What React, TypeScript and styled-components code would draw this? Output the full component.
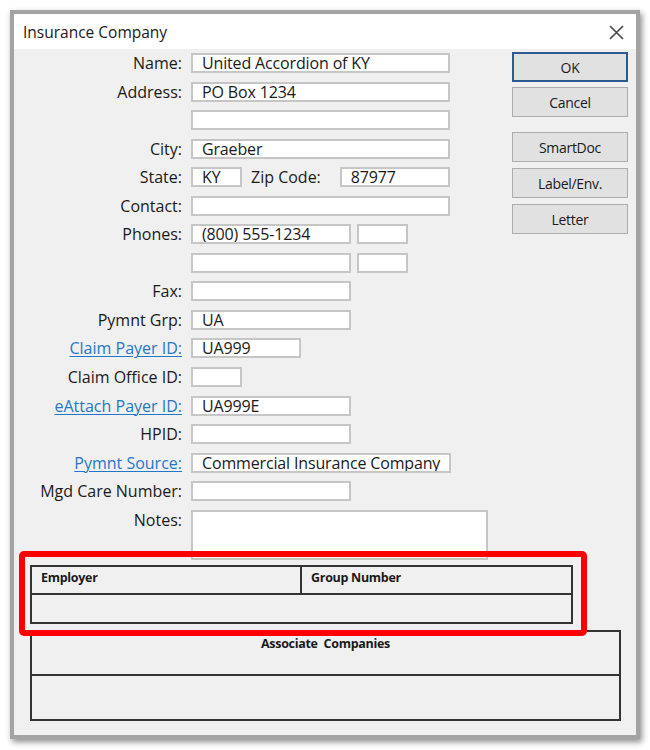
import React from "react";
import styled, { createGlobalStyle } from "styled-components";

const Global = createGlobalStyle`
  html, body { margin: 0; padding: 0; background: #ffffff; }
  body { font-family: "Open Sans", "Noto Sans", sans-serif; color: #1a1a1a; }
`;

const Page = styled.div`
  width: 650px;
  height: 750px;
  padding: 10px 0 0 10px;
  box-sizing: border-box;
`;

const Window = styled.div`
  width: 630px;
  height: 729px;
  box-sizing: border-box;
  border: 4px solid #a3a3a3;
  box-shadow: 2px 3px 6px rgba(0, 0, 0, 0.45);
  background: #f0f0f0;
  display: flex;
  flex-direction: column;
`;

const TitleBar = styled.div`
  height: 35px;
  background: #ffffff;
  display: flex;
  align-items: center;
  justify-content: space-between;
  padding: 0 12px 0 9px;
  font-size: 15.5px;
  flex-shrink: 0;
`;

const CloseIcon = styled.svg`
  width: 15px;
  height: 15px;
  margin-top: 2px;
`;

const Body = styled.div`
  flex: 1;
  display: flex;
  flex-direction: column;
  padding-top: 4px;
`;

const Top = styled.div`
  display: flex;
  align-items: flex-start;
`;

const Form = styled.div`
  display: grid;
  grid-template-columns: 168px 1fr;
  grid-auto-rows: auto;
  row-gap: 8.56px;
  column-gap: 9px;
  width: 498px;
  flex-shrink: 0;
`;

const Label = styled.div<{ $link?: boolean }>`
  grid-column: 1;
  align-self: start;
  text-align: right;
  font-size: 16px;
  line-height: 20px;
  height: 20px;
  white-space: nowrap;
  color: ${(p) => (p.$link ? "#1f78c8" : "#1a1a1a")};
  text-decoration: ${(p) => (p.$link ? "underline" : "none")};
  text-underline-offset: 2px;
  text-decoration-thickness: 1px;
`;

const Fields = styled.div`
  grid-column: 2;
  display: flex;
  align-items: center;
  gap: 6px;
  height: 20px;
`;

const Field = styled.div<{ $w: number; $h?: number }>`
  width: ${(p) => p.$w}px;
  height: ${(p) => p.$h ?? 20}px;
  box-sizing: border-box;
  border: 2px solid #c6c6c6;
  background: #ffffff;
  font-size: 16px;
  letter-spacing: -0.15px;
  line-height: 16px;
  padding-left: 9px;
  white-space: nowrap;
  overflow: hidden;
  flex-shrink: 0;
`;

const NotesField = styled(Field)`
  grid-column: 2;
`;

const InlineLabel = styled.span`
  font-size: 16px;
  margin: 0 13px 0 3px;
  white-space: nowrap;
`;

const Buttons = styled.div`
  display: flex;
  flex-direction: column;
  margin-top: -1px;
`;

const Button = styled.div<{ $default?: boolean; $gap?: number }>`
  width: 116px;
  height: 30px;
  box-sizing: border-box;
  margin-top: ${(p) => p.$gap ?? 0}px;
  border: ${(p) => (p.$default ? "2px solid #2e5b8f" : "1px solid #adadad")};
  background: #e1e1e1;
  display: flex;
  align-items: center;
  justify-content: center;
  font-size: 14px;
  letter-spacing: -0.3px;
  color: #1a1a1a;
`;

const Tables = styled.div`
  display: flex;
  flex-direction: column;
  padding-left: 16px;
  margin-top: 5px;
`;

const Highlight = styled.div`
  position: relative;
  width: 543px;
`;

const RedBox = styled.div`
  position: absolute;
  left: -11px;
  top: -14px;
  right: -14px;
  bottom: -12px;
  border: 6px solid #ff0000;
  border-radius: 5px;
  pointer-events: none;
`;

const Grid = styled.div<{ $w: number; $head: number; $rows: number }>`
  width: ${(p) => p.$w}px;
  box-sizing: border-box;
  border: 2px solid #333333;
  display: grid;
  grid-template-rows: ${(p) => p.$head}px ${(p) => p.$rows}px;
  background: #f0f0f0;
`;

const HeadRow = styled.div<{ $cols: string }>`
  display: grid;
  grid-template-columns: ${(p) => p.$cols};
  border-bottom: 2px solid #333333;
`;

const HeadCell = styled.div<{ $center?: boolean; $divider?: boolean }>`
  font-size: 12.5px;
  font-weight: 700;
  letter-spacing: -0.3px;
  padding: ${(p) => (p.$center ? "3px 0 0 0" : "2px 0 0 9px")};
  text-align: ${(p) => (p.$center ? "center" : "left")};
  border-right: ${(p) => (p.$divider ? "2px solid #333333" : "none")};
`;

const Cell = styled.div``;

const AssocGrid = styled(Grid)`
  margin-top: 6px;
`;

type RowDef = { label: string; link?: boolean; fields: { w: number; v?: string }[] };

const rows: RowDef[] = [
  { label: "Name:", fields: [{ w: 259, v: "United Accordion of KY" }] },
  { label: "Address:", fields: [{ w: 259, v: "PO Box 1234" }] },
  { label: "", fields: [{ w: 259 }] },
  { label: "City:", fields: [{ w: 259, v: "Graeber" }] },
];

const rows2: RowDef[] = [
  { label: "Contact:", fields: [{ w: 259 }] },
  { label: "Phones:", fields: [{ w: 160, v: "(800) 555-1234" }, { w: 51 }] },
  { label: "", fields: [{ w: 160 }, { w: 51 }] },
  { label: "Fax:", fields: [{ w: 160 }] },
  { label: "Pymnt Grp:", fields: [{ w: 160, v: "UA" }] },
  { label: "Claim Payer ID:", link: true, fields: [{ w: 110, v: "UA999" }] },
  { label: "Claim Office ID:", fields: [{ w: 51 }] },
  { label: "eAttach Payer ID:", link: true, fields: [{ w: 160, v: "UA999E" }] },
  { label: "HPID:", fields: [{ w: 160 }] },
  { label: "Pymnt Source:", link: true, fields: [{ w: 260, v: "Commercial Insurance Company" }] },
  { label: "Mgd Care Number:", fields: [{ w: 160 }] },
];

function renderRow(r: RowDef, i: number) {
  return (
    <React.Fragment key={r.label + i}>
      <Label $link={r.link}>{r.label}</Label>
      <Fields>
        {r.fields.map((f, j) => (
          <Field key={j} $w={f.w}>
            {f.v}
          </Field>
        ))}
      </Fields>
    </React.Fragment>
  );
}

export default function App() {
  return (
    <>
      <Global />
      <Page>
        <Window>
          <TitleBar>
            <span>Insurance Company</span>
            <CloseIcon viewBox="0 0 15 15">
              <path d="M1 1 L14 14 M14 1 L1 14" stroke="#4a4a4a" strokeWidth="1.7" fill="none" />
            </CloseIcon>
          </TitleBar>
          <Body>
            <Top>
              <Form>
                {rows.map(renderRow)}
                <Label>State:</Label>
                <Fields>
                  <Field $w={51}>KY</Field>
                  <InlineLabel>Zip Code:</InlineLabel>
                  <Field $w={110}>87977</Field>
                </Fields>
                {rows2.map(renderRow)}
                <Label>Notes:</Label>
                <NotesField $w={297} $h={50} />
              </Form>
              <Buttons>
                <Button $default>OK</Button>
                <Button $gap={5}>Cancel</Button>
                <Button $gap={15}>SmartDoc</Button>
                <Button $gap={6}>Label/Env.</Button>
                <Button $gap={6}>Letter</Button>
              </Buttons>
            </Top>
            <Tables>
              <Highlight>
                <Grid $w={543} $head={28} $rows={27}>
                  <HeadRow $cols="270px 1fr">
                    <HeadCell $divider>Employer</HeadCell>
                    <HeadCell>Group Number</HeadCell>
                  </HeadRow>
                  <Cell />
                </Grid>
                <RedBox />
              </Highlight>
              <AssocGrid $w={591} $head={44} $rows={43}>
                <HeadRow $cols="1fr">
                  <HeadCell $center>Associate&nbsp; Companies</HeadCell>
                </HeadRow>
                <Cell />
              </AssocGrid>
            </Tables>
          </Body>
        </Window>
      </Page>
    </>
  );
}
